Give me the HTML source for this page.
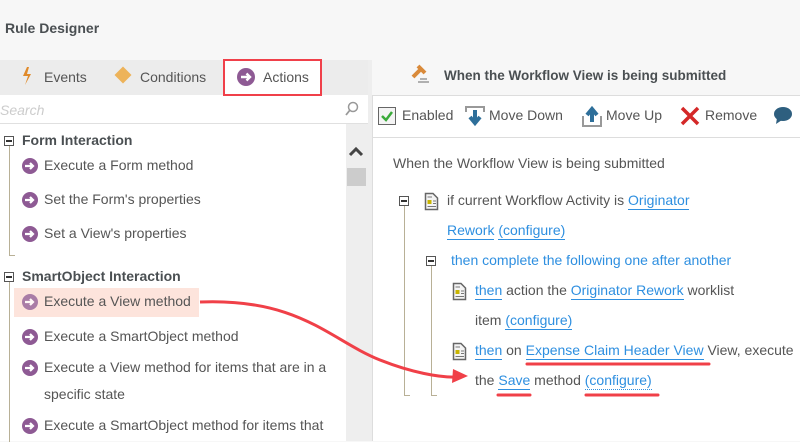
<!DOCTYPE html>
<html><head><meta charset="utf-8"><style>
*{margin:0;padding:0;box-sizing:border-box}
body{width:800px;height:441px;overflow:hidden;background:#f7f7f7;font-family:"Liberation Sans",sans-serif;color:#555;font-size:14px;position:relative}
.a{position:absolute;white-space:nowrap}
.b{font-weight:bold;color:#4a4f52}
.l{color:#2e8fe0;border-bottom:1px solid #2e8fe0;padding-bottom:1px}
.box{position:absolute;width:10px;height:10px;border:1px solid #555;background:#fff}
.box:after{content:"";position:absolute;left:1px;top:3px;width:6px;height:1.5px;background:#333}
</style></head><body>
<svg width="0" height="0" style="position:absolute"><defs>
<g id="doc"><path d="M1.5 1.5H9L13.5 6V17.5H1.5Z" fill="#f4f4f4" stroke="#666" stroke-width="1.5"/><rect x="3.5" y="8" width="4" height="4" fill="#c8b400"/><path d="M3.5 5H8M9 9H12M9 11.5H12M3.5 14.5H12" stroke="#777" stroke-width="1"/></g>
</defs></svg>
<div class="a b" style="left:5px;top:20px;font-size:14px">Rule Designer</div>
<div class="a" style="left:0;top:60px;width:368px;height:35px;background:#ececec"></div>
<div class="a" style="left:0;top:95px;width:368px;height:346px;background:#fff"></div>
<div class="a" style="left:0;top:123px;width:368px;height:1px;background:#e0e0e0"></div>
<div class="a" style="left:346px;top:124px;width:22px;height:317px;background:#eee"></div>
<div class="a" style="left:347px;top:168px;width:19px;height:18px;background:#ccc"></div>
<svg class="a" style="left:348px;top:146px" width="16" height="12"><path d="M2 9 L8 3 L14 9" stroke="#444" stroke-width="3" fill="none"/></svg>
<svg class="a" style="left:20px;top:66px" width="14" height="20"><path d="M7 1 L3 10 L8 10 L5 19 L11 8 L7 8 L9 1Z" fill="#e08a2a"/></svg>
<div class="a" style="left:44px;top:69px;font-size:14px">Events</div>
<div class="a" style="left:117px;top:69px;width:12px;height:12px;background:#edb35a;transform:rotate(45deg)"></div>
<div class="a" style="left:140px;top:69px">Conditions</div>
<div class="a" style="left:223px;top:59px;width:99px;height:37px;border:2px solid #f0404a;background:#fff"></div>
<svg class="a" style="left:236px;top:67px" width="20" height="20"><circle cx="10" cy="10" r="9" fill="#8e5a94"/><path d="M5 10H14M10.5 6.5L14 10L10.5 13.5" stroke="#fff" stroke-width="2.4" fill="none"/></svg>
<div class="a" style="left:263px;top:69px">Actions</div>
<div class="a" style="left:0;top:102px;color:#ccc;font-style:italic">Search</div>
<svg class="a" style="left:344px;top:101px" width="16" height="16"><circle cx="9" cy="6" r="4.5" stroke="#999" stroke-width="1.5" fill="none"/><path d="M6 9L2 14" stroke="#999" stroke-width="1.8"/></svg>
<div class="a" style="left:9px;top:146px;width:1px;height:110px;background:#b8b096"></div>
<div class="a" style="left:9px;top:255px;width:6px;height:1px;background:#b8b096"></div>
<div class="a" style="left:9px;top:282px;width:1px;height:160px;background:#b8b096"></div>
<div class="box" style="left:4px;top:136px"></div>
<div class="a b" style="left:22px;top:132px">Form Interaction</div>
<div class="box" style="left:4px;top:272px"></div>
<div class="a b" style="left:22px;top:268px">SmartObject Interaction</div>
<div class="a" style="left:14px;top:288px;width:185px;height:29px;background:#fde4dc"></div>
<div class="a" style="left:44px;top:157px">Execute a Form method</div>
<div class="a" style="left:44px;top:191px">Set the Form's properties</div>
<div class="a" style="left:44px;top:225px">Set a View's properties</div>
<div class="a" style="left:44px;top:293px">Execute a View method</div>
<div class="a" style="left:44px;top:328px">Execute a SmartObject method</div>
<div class="a" style="left:44px;top:359px">Execute a View method for items that are in a</div>
<div class="a" style="left:44px;top:386px">specific state</div>
<div class="a" style="left:44px;top:417px">Execute a SmartObject method for items that</div>
<svg class="a" style="left:21px;top:157px" width="20" height="280">
<g id="ar"><circle cx="9" cy="9" r="8" fill="#8e5a94"/><path d="M4 9H12M9 6L12 9L9 12" stroke="#fff" stroke-width="2.2" fill="none"/></g>
<use href="#ar" y="34"/><use href="#ar" y="68"/><use href="#ar" y="136" opacity=".75"/><use href="#ar" y="171"/><use href="#ar" y="202"/><use href="#ar" y="260"/>
</svg>
<div class="a" style="left:368px;top:60px;width:4px;height:381px;background:#eee"></div>
<svg class="a" style="left:410px;top:64px" width="22" height="22"><path d="M3 13L11 5M8 2L15 9" stroke="#d98a3a" stroke-width="4"/><path d="M8 18H19M10 15H17" stroke="#999" stroke-width="1.5"/></svg>
<div class="a b" style="left:444px;top:68px;font-size:13.5px">When the Workflow View is being submitted</div>
<div class="a" style="left:372px;top:95px;width:428px;height:346px;background:#fff;border-top:1px solid #ddd;border-left:1px solid #ddd"></div>
<div class="a" style="left:373px;top:137px;width:427px;height:1px;background:#ddd"></div>
<div class="a" style="left:378px;top:107px;width:18px;height:18px;border:1.5px solid #666;background:#f4f4f4"></div>
<svg class="a" style="left:380px;top:109px" width="14" height="14"><path d="M2 7L6 11L12 3" stroke="#3aaa3a" stroke-width="2.5" fill="none"/></svg>
<div class="a" style="left:402px;top:107px">Enabled</div>
<svg class="a" style="left:465px;top:106px" width="20" height="22"><path d="M1 6V1H19V6" stroke="#999" stroke-width="2" fill="none"/><path d="M10 4V16M5 11L10 17L15 11" stroke="#2e6f9a" stroke-width="4" fill="none"/></svg>
<div class="a" style="left:489px;top:107px">Move Down</div>
<svg class="a" style="left:582px;top:106px" width="20" height="22"><path d="M1 10V20H19V10" stroke="#999" stroke-width="2" fill="none"/><path d="M10 16V4M5 9L10 3L15 9" stroke="#2e6f9a" stroke-width="4" fill="none"/></svg>
<div class="a" style="left:606px;top:107px">Move Up</div>
<svg class="a" style="left:680px;top:106px" width="20" height="20"><path d="M2 2L18 18M18 2L2 18" stroke="#d42828" stroke-width="3.5"/></svg>
<div class="a" style="left:705px;top:107px">Remove</div>
<svg class="a" style="left:773px;top:106px" width="20" height="20"><ellipse cx="10" cy="8" rx="9" ry="7" fill="#2e5f7f"/><path d="M4 12L3 18L9 14Z" fill="#2e5f7f"/></svg>
<div class="a" style="left:393px;top:155px">When the Workflow View is being submitted</div>
<div class="a" style="left:404px;top:206px;width:1px;height:190px;background:#b8b096"></div>
<div class="a" style="left:404px;top:395px;width:6px;height:1px;background:#b8b096"></div>
<div class="a" style="left:431px;top:266px;width:1px;height:130px;background:#b8b096"></div>
<div class="a" style="left:431px;top:395px;width:6px;height:1px;background:#b8b096"></div>
<div class="box" style="left:399px;top:196px"></div>
<div class="box" style="left:426px;top:256px"></div>
<svg class="a" style="left:424px;top:192px" width="16" height="20"><use href="#doc"/></svg>
<svg class="a" style="left:452px;top:282px" width="16" height="20"><use href="#doc"/></svg>
<svg class="a" style="left:452px;top:342px" width="16" height="20"><use href="#doc"/></svg>
<div class="a" style="left:447px;top:192px">if current Workflow Activity is <span class="l">Originator</span></div>
<div class="a" style="left:447px;top:222px"><span class="l">Rework</span> <span class="l">(configure)</span></div>
<div class="a" style="left:451px;top:252px;color:#2e8fe0">then complete the following one after another</div>
<div class="a" style="left:475px;top:282px"><span class="l">then</span> action the <span class="l">Originator Rework</span> worklist</div>
<div class="a" style="left:475px;top:312px">item <span class="l">(configure)</span></div>
<div class="a" style="left:475px;top:342px"><span class="l">then</span> on <span class="l">Expense Claim Header View</span> View, execute</div>
<div class="a" style="left:475px;top:372px">the <span class="l">Save</span> method <span class="l" style="border-bottom-style:dotted">(configure)</span></div>
<svg class="a" style="left:0;top:0" width="800" height="441">
<path d="M200 302 C300 298 330 340 380 360 C410 372 440 378 458 377" stroke="#f04048" stroke-width="3" fill="none"/>
<path d="M453 369 L468 376 L452 383Z" fill="#f04048"/>
<path d="M527 364H709M498 395H530M586 395H658" stroke="#f04048" stroke-width="3" stroke-linecap="round"/>
</svg>
</body></html>
